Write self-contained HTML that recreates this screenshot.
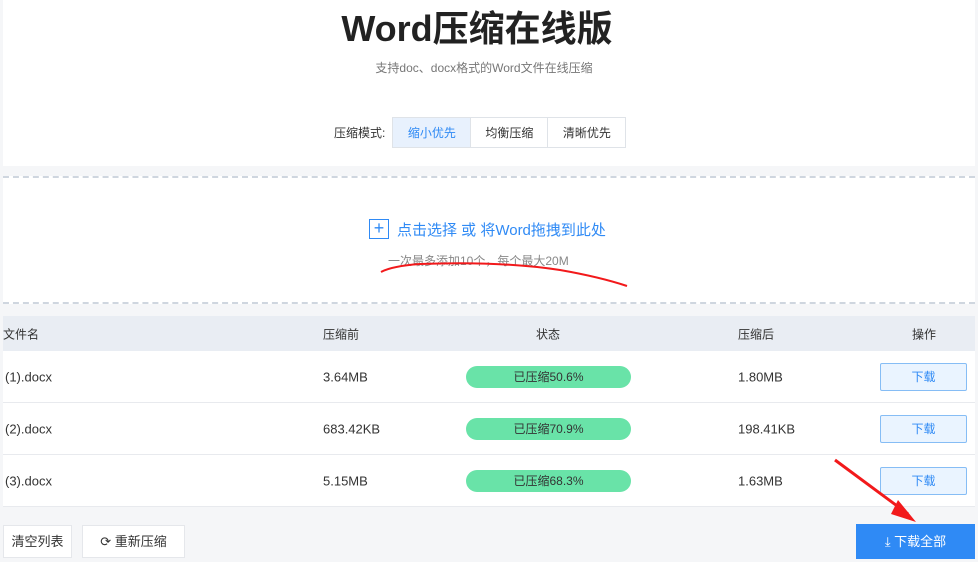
<!DOCTYPE html>
<html><head><meta charset="utf-8"><style>
*{margin:0;padding:0;box-sizing:border-box}
body{width:978px;height:562px;overflow:hidden;background:#f5f6f8;font-family:"Liberation Sans","Noto Sans CJK SC",sans-serif;color:#333;position:relative}
.top{position:absolute;left:3px;top:0;width:972px;height:166px;background:#fff}
h1{position:absolute;top:0px;left:-12px;width:100%;text-align:center;font-size:36px;font-weight:bold;color:#222}
.sub{position:absolute;top:59px;left:-5px;width:100%;text-align:center;font-size:12px;color:#777}
.mode{position:absolute;top:117px;left:331px;font-size:12px;display:flex;align-items:center}
.mode span.l{margin-right:8px;color:#333}
.mode .b{height:31px;border:1px solid #dfe3e8;display:flex;align-items:center;justify-content:center;background:#fff;margin-left:-1px;font-size:12px}
.up{position:absolute;left:3px;top:176px;width:972px;height:128px;background:#fff;border-top:2px dashed #cfd6df;border-bottom:2px dashed #cfd6df}
.plus{position:absolute;left:366px;top:41px;width:20px;height:20px;border:1px solid #2f8af5;color:#2f8af5;font-size:18px;line-height:17px;text-align:center}
.ut{position:absolute;left:394px;top:41px;font-size:15px;color:#2f8af5}
.ut2{position:absolute;left:385px;top:74px;font-size:12px;color:#888}
.th{position:absolute;left:3px;top:316px;width:972px;height:35px;background:#e9edf3;font-size:12px}
.row{position:absolute;left:3px;width:972px;height:52px;background:#fff;border-bottom:1px solid #e8eaee;font-size:13px}
.c{position:absolute;top:50%;transform:translateY(-50%);white-space:nowrap}
.st{position:absolute;left:463px;top:15px;width:165px;height:22px;border-radius:11px;background:#69e3a8;text-align:center;line-height:22px;font-size:12px;color:#333}
.dl{position:absolute;left:877px;top:12px;width:87px;height:28px;border:1px solid #86bdf5;background:#eaf4ff;color:#2f8af5;text-align:center;line-height:26px;font-size:12px;border-radius:2px}
.btn{position:absolute;top:525px;height:33px;background:#fff;border:1px solid #e5e7eb;font-size:13px;line-height:31px;text-align:center}
.all{position:absolute;left:856px;top:524px;width:119px;height:35px;background:#2f8af5;color:#fff;font-size:13px;line-height:35px;text-align:center}
</style></head><body>
<div class="top">
<h1>Word压缩在线版</h1>
<div class="sub">支持doc、docx格式的Word文件在线压缩</div>
<div class="mode"><span class="l">压缩模式:</span>
<div class="b" style="width:79px;background:#e8f1fd;color:#2f8af5">缩小优先</div>
<div class="b" style="width:78px">均衡压缩</div>
<div class="b" style="width:79px">清晰优先</div></div>
</div>
<div class="up">
<div class="plus">+</div>
<div class="ut">点击选择 或 将Word拖拽到此处</div>
<div class="ut2">一次最多添加10个，每个最大20M</div>
</div>
<div class="th"><span class="c" style="left:0">文件名</span><span class="c" style="left:320px">压缩前</span><span class="c" style="left:533px">状态</span><span class="c" style="left:735px">压缩后</span><span class="c" style="left:909px">操作</span></div>
<div class="row" style="top:351px"><span class="c" style="left:2px">(1).docx</span><span class="c" style="left:320px">3.64MB</span><div class="st">已压缩50.6%</div><span class="c" style="left:735px">1.80MB</span><div class="dl">下载</div></div>
<div class="row" style="top:403px"><span class="c" style="left:2px">(2).docx</span><span class="c" style="left:320px">683.42KB</span><div class="st">已压缩70.9%</div><span class="c" style="left:735px">198.41KB</span><div class="dl">下载</div></div>
<div class="row" style="top:455px"><span class="c" style="left:2px">(3).docx</span><span class="c" style="left:320px">5.15MB</span><div class="st">已压缩68.3%</div><span class="c" style="left:735px">1.63MB</span><div class="dl">下载</div></div>
<div class="btn" style="left:3px;width:69px">清空列表</div>
<div class="btn" style="left:82px;width:103px">⟳ 重新压缩</div>
<div class="all">⤓ 下载全部</div>
<svg style="position:absolute;left:0;top:0" width="978" height="562"><path d="M381 272 Q392 266 420 264 Q500 261 560 270 Q600 277 627 286" stroke="#f2191b" stroke-width="2" fill="none"/>
<path d="M835 460 L908 514" stroke="#f2191b" stroke-width="3"/><path d="M898 500 L916 522 L891 514 Z" fill="#f2191b"/></svg>
</body></html>
